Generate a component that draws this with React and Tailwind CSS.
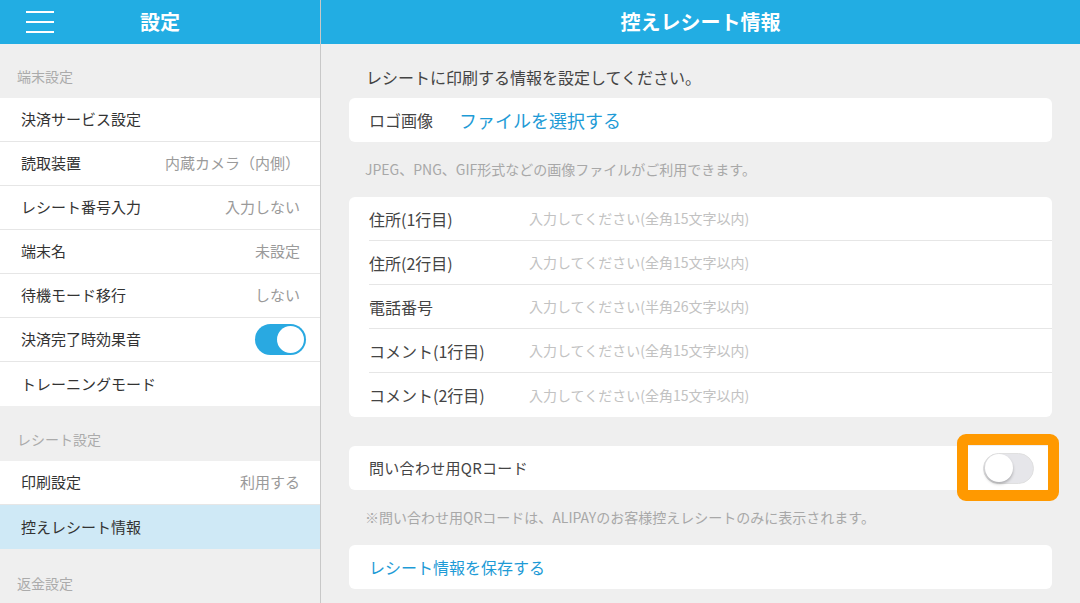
import React from 'react';

const font = { fontFamily: '"Noto Sans CJK JP", "Noto Sans", sans-serif' };

const SectionLabel = ({ children, h }) => (
    <div className={`${h} flex items-end pb-[11px] pl-[17px] text-[14px] text-[#ababab]`}>{children}</div>
);

const Row = ({ label, value, active, last, children }) => (
    <div className={`h-[44px] flex items-center justify-between pl-[21px] pr-[20px] ${active ? 'bg-[#cfe9f6]' : 'bg-white'} ${last ? '' : 'border-b border-[#e6e6e6]'}`}>
        <span className="text-[15px] text-[#333]">{label}</span>
        {value && <span className="text-[15px] text-[#9a9a9a]">{value}</span>}
        {children}
    </div>
);

const Toggle = ({ on }) =>
    on ? (
        <div className="w-[51px] h-[31px] rounded-full bg-[#29a9e1] flex items-center justify-end pr-[2px]">
            <div className="w-[27px] h-[27px] rounded-full bg-white" />
        </div>
    ) : (
        <div className="w-[51px] h-[31px] rounded-full bg-[#e6e6ea] border border-[#e0e0e0] flex items-center pl-[1px]">
            <div className="w-[28px] h-[28px] rounded-full bg-white shadow-[0_2px_3px_rgba(0,0,0,0.25)]" />
        </div>
    );

const fields = [
    ['住所(1行目)', '入力してください(全角15文字以内)'],
    ['住所(2行目)', '入力してください(全角15文字以内)'],
    ['電話番号', '入力してください(半角26文字以内)'],
    ['コメント(1行目)', '入力してください(全角15文字以内)'],
    ['コメント(2行目)', '入力してください(全角15文字以内)'],
];

export default function App() {
    return (
        <div className="w-[1080px] h-[603px] overflow-hidden flex bg-[#efefef]" style={font}>
            {/* left menu */}
            <div className="w-[320px] shrink-0 overflow-hidden">
                <div className="h-[44px] bg-[#22ade3] flex items-center relative">
                    <div className="ml-[26px] w-[28px] flex flex-col gap-[8px]">
                        <div className="h-[2px] bg-white" />
                        <div className="h-[2px] bg-white" />
                        <div className="h-[2px] bg-white" />
                    </div>
                    <div className="absolute left-0 right-0 text-center text-white text-[20px] font-bold pointer-events-none">設定</div>
                </div>
                <SectionLabel h="h-[54px]">端末設定</SectionLabel>
                <Row label="決済サービス設定" />
                <Row label="読取装置" value="内蔵カメラ（内側）" />
                <Row label="レシート番号入力" value="入力しない" />
                <Row label="端末名" value="未設定" />
                <Row label="待機モード移行" value="しない" />
                <div className="h-[44px] flex items-center justify-between pl-[21px] pr-[14px] bg-white border-b border-[#e6e6e6]">
                    <span className="text-[15px] text-[#333]">決済完了時効果音</span>
                    <Toggle on />
                </div>
                <Row label="トレーニングモード" last />
                <SectionLabel h="h-[55px]">レシート設定</SectionLabel>
                <Row label="印刷設定" value="利用する" />
                <Row label="控えレシート情報" active last />
                <SectionLabel h="h-[56px]">返金設定</SectionLabel>
            </div>

            <div className="w-px bg-[#c8c8c8] shrink-0" />

            {/* right detail */}
            <div className="flex-1">
                <div className="h-[44px] bg-[#22ade3] flex items-center justify-center text-white text-[20px] font-bold">控えレシート情報</div>
                <div className="px-[28px]">
                    <p className="h-[54px] flex items-center pt-[12px] pl-[17px] text-[16px] text-[#444]">レシートに印刷する情報を設定してください。</p>
                    <div className="h-[44px] bg-white rounded-[6px] flex items-center px-[20px]">
                        <span className="w-[90px] text-[16px] text-[#444]">ロゴ画像</span>
                        <span className="text-[18px] text-[#1e9bd6]">ファイルを選択する</span>
                    </div>
                    <p className="h-[55px] flex items-center pl-[16px] text-[14px] text-[#a8a8a8]">JPEG、PNG、GIF形式などの画像ファイルがご利用できます。</p>
                    <div className="bg-white rounded-[6px]">
                        {fields.map(([label, ph], i) => (
                            <div key={label} className="pl-[20px]">
                                <div className={`h-[44px] flex items-center ${i < fields.length - 1 ? 'border-b border-[#e6e6e6]' : ''}`}>
                                    <span className="w-[160px] text-[16px] text-[#444]">{label}</span>
                                    <span className="text-[14px] text-[#c2c2c2]">{ph}</span>
                                </div>
                            </div>
                        ))}
                    </div>
                    <div className="h-[29px]" />
                    <div className="h-[44px] bg-white rounded-[6px] flex items-center justify-between pl-[20px] pr-[18px] relative">
                        <span className="text-[15px] text-[#444] tracking-[0.3px]">問い合わせ用QRコード</span>
                        <Toggle />
                        <div className="absolute left-[608px] top-[-12px] w-[102px] h-[67px] border-[11px] border-[#ff9900] rounded-[9px]" />
                    </div>
                    <p className="h-[55px] flex items-center pl-[16px] text-[14px] text-[#a8a8a8]">※問い合わせ用QRコードは、ALIPAYのお客様控えレシートのみに表示されます。</p>
                    <div className="h-[44px] bg-white rounded-[6px] flex items-center px-[20px]">
                        <span className="text-[16px] text-[#1e9bd6]">レシート情報を保存する</span>
                    </div>
                </div>
            </div>
        </div>
    );
}
